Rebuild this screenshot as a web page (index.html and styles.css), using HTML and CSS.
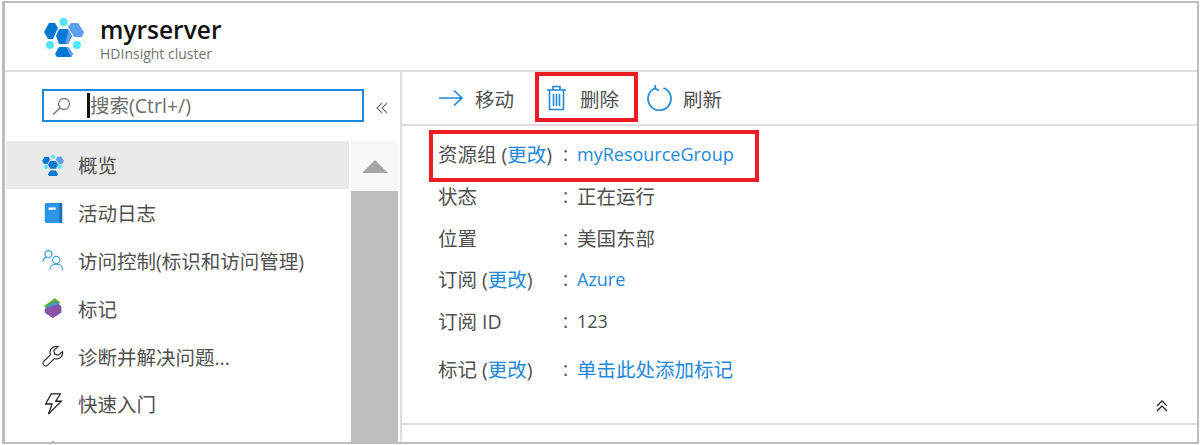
FILE: index.html
```html
<!DOCTYPE html>
<html lang="zh-CN">
<head>
<meta charset="utf-8">
<title>myrserver</title>
<link rel="stylesheet" href="styles.css">
</head>
<body>
<div class="frame">
  <header class="head">
    <svg class="logo" viewBox="0 0 40 44" width="40" height="44">
      <circle cx="19.500" cy="5" r="4" fill="#50e6ff"/>
      <circle cx="6" cy="28" r="4" fill="#50e6ff"/>
      <circle cx="33" cy="28" r="4" fill="#50e6ff"/>
      <path d="M5 6h6l3 5-5 11H4L0 15z" fill="#0078d4"/>
      <path d="M27 6h7l6 9-2 5h-8l-6-10z" fill="#5ea0ef"/>
      <path d="M15 12h9l4 7-4 8h-9l-3-8z" fill="#0078d4"/>
      <path d="M24 12l4 7-4 8-3-1 2-7z" fill="#5ea0ef"/>
      <path d="M15 30h9l5 7-2 3H13l-2-3z" fill="#0078d4"/>
      <path d="M22 30h2l5 7-2 3z" fill="#5ea0ef"/>
    </svg>
    <div class="titles">
      <div class="title">myrserver</div>
      <div class="subtitle">HDInsight cluster</div>
    </div>
  </header>
  <div class="main">
    <aside class="side">
      <div class="search-row">
        <div class="search">
          <svg class="search-icon" viewBox="0 0 20 20" width="20" height="20"><circle cx="12" cy="8" r="5.500" fill="none" stroke="#777" stroke-width="1.300"/><path d="M8 12l-7 6.500" stroke="#777" stroke-width="1.500"/></svg>
          <span class="caret"></span>
          <span class="placeholder">搜索(Ctrl+/)</span>
        </div>
        <svg class="collapse" viewBox="0 0 12 12" width="12" height="12"><path d="M6 1L1 6l5 5M11 1L6 6l5 5" fill="none" stroke="#777" stroke-width="1.200"/></svg>
      </div>
      <div class="nav-wrap">
        <nav class="nav">
          <div class="nav-item active">
            <svg class="nav-icon" viewBox="0 0 24 24" width="22" height="22">
              <circle cx="12" cy="3" r="2.300" fill="#50e6ff"/><circle cx="4.500" cy="14" r="2.300" fill="#50e6ff"/><circle cx="19.500" cy="14" r="2.300" fill="#50e6ff"/>
              <path d="M3 3h4l2 3-3 5H2.500L0 7.500z" fill="#0078d4"/><path d="M17 3h4l3 4.500-2 3.500h-3.500L15 6z" fill="#5ea0ef"/>
              <path d="M9 7.500h6l2.500 4-2.500 4.500H9l-2.500-4.500z" fill="#0078d4"/><path d="M9 18h6l2.500 4-1.500 2H8l-1.500-2z" fill="#0078d4"/>
            </svg>
            <span>概览</span>
          </div>
          <div class="nav-item">
            <svg class="nav-icon" viewBox="0 0 24 24" width="22" height="22">
              <rect x="3" y="1" width="19" height="22" rx="2" fill="#2b96e6"/><rect x="19" y="1" width="3" height="22" fill="#1a6fb8"/><rect x="7" y="6" width="8" height="2.500" fill="#fff"/>
            </svg>
            <span>活动日志</span>
          </div>
          <div class="nav-item">
            <svg class="nav-icon" viewBox="0 0 24 24" width="22" height="22" fill="none" stroke="#3f9fd6" stroke-width="1.300">
              <circle cx="7" cy="5.500" r="3.800"/><path d="M1 14c0-3 2-4.500 4-4.500"/><circle cx="15.500" cy="12" r="4"/><path d="M8.500 23c0-4 3-6.500 7-6.500s7 2.500 7 6.500"/>
            </svg>
            <span>访问控制(标识和访问管理)</span>
          </div>
          <div class="nav-item">
            <svg class="nav-icon" viewBox="0 0 24 24" width="22" height="22">
              <path d="M2 10L14 1l6 5-9 9z" fill="#5db31c"/><path d="M4 11L15 4l6 6v7l-9 6-9-6z" fill="#4a8fd0"/><path d="M3 13l15-5 3 3v6l-9 6-9-6z" fill="#8c52a8"/>
            </svg>
            <span>标记</span>
          </div>
          <div class="nav-item">
            <svg class="nav-icon" viewBox="0 0 24 24" width="22" height="22"><path d="M15 1.500a6.500 6.500 0 0 0-5.700 9L1.800 18a3 3 0 0 0 4.200 4.200l7.600-7.500a6.500 6.500 0 0 0 8.700-7.600L18 11l-4.300-1-.7-4.300 4.400-3.900a6.500 6.500 0 0 0-2.400-.3z" fill="none" stroke="#333" stroke-width="1.300"/></svg>
            <span>诊断并解决问题...</span>
          </div>
          <div class="nav-item">
            <svg class="nav-icon" viewBox="0 0 24 24" width="22" height="22"><path d="M10 1h10l-5 8h6L7 23l4-11H4z" fill="none" stroke="#222" stroke-width="1.400"/></svg>
            <span>快速入门</span>
          </div>
          <div class="nav-item">
            <svg class="nav-icon" viewBox="0 0 24 24" width="22" height="22"><path d="M12 0l9 8v12H3V8z" fill="#8c52a8"/></svg>
          </div>
        </nav>
        <div class="scrollbar">
          <div class="scroll-up"><span class="arrow"></span></div>
          <div class="scroll-thumb"></div>
        </div>
      </div>
    </aside>
    <section class="content">
      <div class="toolbar">
        <div class="tool tool-move">
          <svg viewBox="0 0 26 18" width="26" height="18"><path d="M1 9h23M16 1.500L24 9l-8 7.500" fill="none" stroke="#1e88dc" stroke-width="1.700"/></svg>
          <span>移动</span>
        </div>
        <div class="tool tool-delete">
          <svg viewBox="0 0 20 26" width="20" height="26" fill="none" stroke="#1e88dc" stroke-width="1.600"><path d="M0 5h19M6 5V1.500h7V5M2.500 5v19.500h14V5M6.500 9v12M9.500 9v12M12.500 9v12"/></svg>
          <span>删除</span>
        </div>
        <div class="tool tool-refresh">
          <svg viewBox="0 0 26 26" width="26" height="26" fill="none" stroke="#1e88dc" stroke-width="1.700"><path d="M8 3.200a11.500 11.500 0 1 0 8.500-.2"/><path d="M8.500 0L8 3.500l4 2"/></svg>
          <span>刷新</span>
        </div>
        <div class="red-box red-delete"></div>
      </div>
      <div class="details">
        <div class="red-box red-group"></div>
        <div class="row"><div class="label">资源组 (<a>更改</a>)</div><div class="colon">:</div><div class="value"><a class="latin">myResourceGroup</a></div></div>
        <div class="row"><div class="label">状态</div><div class="colon">:</div><div class="value">正在运行</div></div>
        <div class="row"><div class="label">位置</div><div class="colon">:</div><div class="value">美国东部</div></div>
        <div class="row"><div class="label">订阅 (<a>更改</a>)</div><div class="colon">:</div><div class="value"><a class="latin">Azure</a></div></div>
        <div class="row"><div class="label">订阅 ID</div><div class="colon">:</div><div class="value latin">123</div></div>
        <div class="row row-tags"><div class="label">标记 (<a>更改</a>)</div><div class="colon">:</div><div class="value"><a>单击此处添加标记</a></div></div>
        <div class="collapse-row">
          <svg viewBox="0 0 12 12" width="12" height="12"><path d="M1 6l5-5 5 5M1 11l5-5 5 5" fill="none" stroke="#222" stroke-width="1.300"/></svg>
        </div>
      </div>
    </section>
  </div>
</div>
</body>
</html>
```
FILE: styles.css
```css
* { box-sizing: border-box; }
html, body { margin: 0; height: 445px; overflow: hidden; background: #fff; }
body {
  padding: 1px 1px 1px 2px;
  font-family: "Open Sans", "Noto Sans CJK SC", sans-serif;
  font-size: 19.500px;
  color: #505050;
}
.latin { font-size: 18px; }
.frame {
  height: 443px;
  border: 2px solid #bdbdbd;
  border-left-width: 3px;
  display: flex;
  flex-direction: column;
  overflow: hidden;
}
.head {
  height: 69px;
  flex: none;
  display: flex;
  align-items: flex-start;
  padding: 14px 0 0 39px;
  gap: 16px;
  border-bottom: 2px solid #dedede;
}
.logo { flex: none; }
.titles { display: flex; flex-direction: column; margin-top: -1px; }
.title { font-size: 24.500px; font-weight: 600; line-height: 28px; color: #111; }
.subtitle { font-size: 14px; line-height: 20px; color: #737373; }
.main { flex: 1; display: flex; min-height: 0; }
.side { width: 397px; flex: none; border-right: 2px solid #dedede; display: flex; flex-direction: column; }
.search-row { height: 69px; flex: none; display: flex; align-items: flex-start; padding: 17px 0 0 37px; }
.search {
  width: 322px;
  height: 33px;
  border: 2px solid #1e88dc;
  display: flex;
  align-items: center;
  padding-left: 8px;
}
.search-icon { flex: none; }
.caret { width: 3px; height: 25px; background: #111; margin-left: 15px; flex: none; }
.placeholder { color: #6e6e6e; margin: -3px 0 0 0; white-space: nowrap; }
.collapse { margin: 13px 0 0 12px; flex: none; }
.nav-wrap { flex: 1; display: flex; min-height: 0; }
.nav { width: 344px; flex: none; overflow: hidden; padding-left: 1px; }
.nav-item {
  height: 47.800px;
  flex: none;
  display: flex;
  align-items: center;
  padding-left: 36px;
  gap: 14px;
  white-space: nowrap;
  color: #505050;
}
.nav-item.active { background: #ebeaea; }
.nav-icon { flex: none; }
.scrollbar { flex: 1; display: flex; flex-direction: column; margin: 0 2px; }
.scroll-up { height: 50px; display: flex; align-items: center; justify-content: center; background: #f8f8f8; flex: none; }
.arrow { width: 0; height: 0; border-left: 13px solid transparent; border-right: 13px solid transparent; border-bottom: 13px solid #a6a6a6; }
.scroll-thumb { flex: 1; background: #bebebe; }
.content { flex: 1; min-width: 0; display: flex; flex-direction: column; position: relative; }
.toolbar { height: 54px; flex: none; display: flex; align-items: center; padding-left: 36px; border-bottom: 2px solid #dedede; position: relative; }
.tool { display: flex; align-items: center; white-space: nowrap; color: #505050; }
.tool-move { gap: 11px; width: 109px; }
.tool-delete { gap: 13px; width: 100px; }
.tool-refresh { gap: 10px; }
.red-box { position: absolute; border: 4px solid #ed1c24; pointer-events: none; }
.red-delete { left: 133px; top: 0; width: 103px; height: 50px; }
.red-group { left: 27px; top: 4px; width: 330px; height: 52px; }
.details { flex: 1; position: relative; padding: 7px 0 0 36px; }
.row { display: flex; height: 41.700px; align-items: center; white-space: nowrap; }
.row-tags { margin-top: 6.500px; }
.label { width: 125px; flex: none; }
.colon { width: 14px; flex: none; }
a { color: #1e88dc; text-decoration: none; }
.collapse-row { position: absolute; right: 29px; top: 274px; line-height: 0; }
.details::after { content: ""; position: absolute; left: 0; right: 0; top: 297px; height: 2px; background: #dedede; }
```
